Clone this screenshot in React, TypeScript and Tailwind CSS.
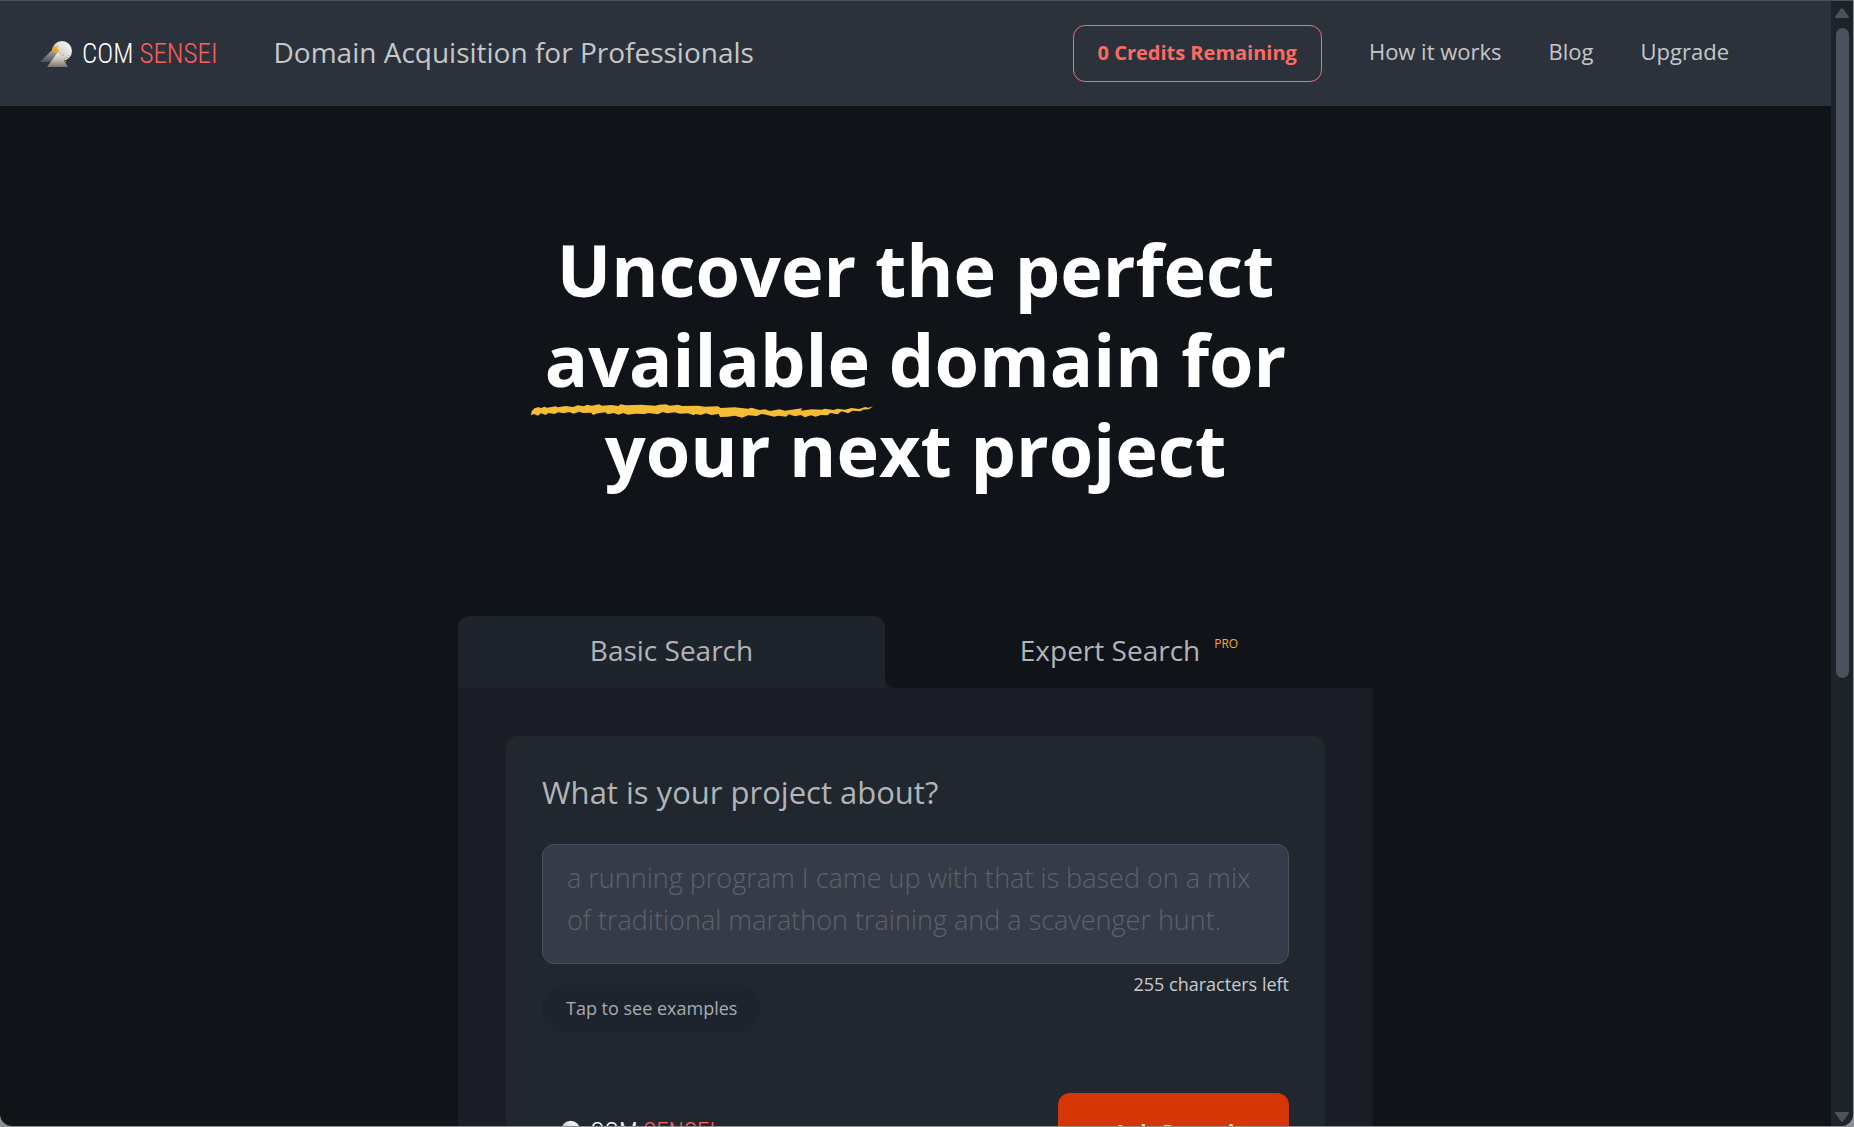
import { useState } from 'react'

const NAV_LINKS = [
  { label: 'How it works', href: '#how-it-works' },
  { label: 'Blog', href: '#blog' },
  { label: 'Upgrade', href: '#upgrade' },
]

const MAX_CHARS = 255

function LogoMark({ className }: { className: string }) {
  return (
    <svg className={className} viewBox="0 0 34 30" aria-hidden="true">
      <defs>
        <linearGradient id="sun" x1="0" y1="1" x2="1" y2="0">
          <stop offset="0" stopColor="#aaa59c" />
          <stop offset="0.6" stopColor="#e4e2de" />
          <stop offset="1" stopColor="#ffffff" />
        </linearGradient>
        <linearGradient id="peakBack" x1="0" y1="0" x2="0" y2="1">
          <stop offset="0" stopColor="#b5b1aa" />
          <stop offset="1" stopColor="#4f5055" />
        </linearGradient>
        <linearGradient id="peakFront" x1="0" y1="0" x2="0" y2="1">
          <stop offset="0" stopColor="#f4f4f4" />
          <stop offset="0.5" stopColor="#c3bfb9" />
          <stop offset="1" stopColor="#7d7268" />
        </linearGradient>
      </defs>
      <circle cx="22" cy="12" r="10" fill="url(#sun)" />
      <path d="M0 23L11 12l3-2 4 4-7 9z" fill="url(#peakBack)" />
      <path d="M12 10l2-3 2 1 2-2-1 4 2 1-1 2 2 1-2 1-2-2-2 1-1-2z" fill="#e9a82c" />
      <path d="M7 28L15 17l3-4 3 4 7 11z" fill="url(#peakFront)" />
      <path d="M24 19h1v1h-1zM26 18h2v1h-2zM23 16h1v1h-1zM25 22h1v1h-1zM28 16h1v1h-1zM19 21h1v1h-1z" fill="#dba640" />
    </svg>
  )
}

function Logo({ small = false }: { small?: boolean }) {
  return (
    <a href="#home" className="flex items-center gap-2">
      <LogoMark className={small ? 'h-7 w-8' : 'h-[30px] w-[34px]'} />
      <span
        className={`font-['Roboto_Condensed','Liberation_Sans_Narrow',Roboto,sans-serif] leading-8 font-light whitespace-nowrap text-white ${
          small ? 'text-[25px]' : 'text-[27px]'
        }`}
      >
        COM <span className="text-[#ff5f5a]">SENSEI</span>
      </span>
    </a>
  )
}

function Header() {
  return (
    <header className="flex h-[105px] shrink-0 items-center bg-[#2b323b] pr-[102px] pl-10">
      <Logo />
      <p className="ml-14 pb-1 text-[28px] text-[#c6c7c9]">Domain Acquisition for Professionals</p>
      <div className="ml-auto flex items-center gap-[47px] text-[22px] text-[#c6c7c9]">
        <button
          type="button"
          className="h-[57px] rounded-xl border border-[#ff6a60] px-6 pb-0.5 text-[20px] font-bold text-[#ff6a60]"
        >
          0 Credits Remaining
        </button>
        {NAV_LINKS.map((link) => (
          <a key={link.label} href={link.href} className="pb-1">
            {link.label}
          </a>
        ))}
      </div>
    </header>
  )
}

function BrushUnderline() {
  return (
    <svg
      className="absolute top-full -left-3.5 -mt-1 h-3.5 w-[342px]"
      viewBox="0 0 1024 42"
      preserveAspectRatio="none"
      aria-hidden="true"
    >
      <path
        d="M0 34L2 22 10 13 24 9 28 13 40 8 48 11 74 7 80 10 104 6 126 9 140 4 158 7 168 2 182 5 204 1 212 5 240 3 262 6 268 1 284 4 330 2 372 5 384 2 404 1 416 5 440 2 452 6 500 5 520 8 560 7 568 12 610 10 650 14 660 11 684 18 700 16 716 21 744 16 760 20 790 16 812 13 808 20 840 16 870 17 880 14 906 18 918 14 940 17 960 12 982 15 1000 9 1010 11 1024 7 1012 16 992 17 988 22 962 20 950 28 930 22 918 31 896 27 888 34 868 33 852 38 838 34 820 40 808 33 790 37 772 31 764 38 740 35 728 38 704 32 690 30 676 36 650 34 632 41 610 35 590 38 566 39 562 30 540 33 524 28 508 33 492 30 488 34 470 28 446 29 430 25 408 28 394 24 380 31 352 27 340 30 312 29 290 32 276 27 262 32 248 27 230 31 222 25 200 28 186 33 180 26 156 27 144 23 128 29 114 24 98 28 82 25 70 30 52 27 44 33 30 28 20 35 10 30z"
        fill="#f5bc35"
      />
    </svg>
  )
}

function Scrollbar() {
  return (
    <div className="flex w-[22px] shrink-0 flex-col items-center bg-[#1c232b] pt-[7px] pb-1" aria-hidden="true">
      <svg width="14" height="10" viewBox="0 0 14 10">
        <path d="M5.5 1.2a2 2 0 0 1 3 0l5 7a1 1 0 0 1-1 1.8h-11a1 1 0 0 1-1-1.8z" fill="#4b525c" />
      </svg>
      <div className="mt-2.5 min-h-0 w-full flex-1">
        <div className="mx-auto h-3/5 w-[13px] rounded-full bg-[#4b525c]" />
      </div>
      <svg width="14" height="10" viewBox="0 0 14 10">
        <path d="M5.5 8.8a2 2 0 0 0 3 0l5-7a1 1 0 0 0-1-1.8h-11a1 1 0 0 0-1 1.8z" fill="#4b525c" />
      </svg>
    </div>
  )
}

function SearchCard() {
  const [project, setProject] = useState('')

  return (
    <form className="rounded-xl bg-[#21272e] px-9 pt-9 pb-12">
      <label htmlFor="project" className="block text-[31px] leading-10 text-[#b1b4b9]">
        What is your project about?
      </label>
      <textarea
        id="project"
        rows={2}
        maxLength={MAX_CHARS}
        value={project}
        onChange={(e) => setProject(e.target.value)}
        placeholder="a running program I came up with that is based on a mix of traditional marathon training and a scavenger hunt."
        className="mt-8 block h-[120px] w-full resize-none rounded-xl border border-[#4a5160] bg-[#363b49] px-6 py-3 text-[27px] leading-[42px] font-light text-white placeholder:text-[#5d626b]"
      />
      <div className="flex items-start justify-between">
        <button
          type="button"
          className="mt-[21px] h-12 rounded-full bg-[#1d242d] px-6 pb-0.5 text-[18px] text-[#a9abae]"
        >
          Tap to see examples
        </button>
        <p className="mt-1.5 text-[18px] leading-7 text-[#c9cbce]">{MAX_CHARS - project.length} characters left</p>
      </div>
      <div className="mt-[60px] flex items-start justify-between pl-2">
        <div className="pt-6">
          <Logo small />
        </div>
        <button type="submit" className="h-20 w-[231px] rounded-xl bg-[#d63603] text-[24px] font-semibold text-white">
          Ask Sensei
        </button>
      </div>
    </form>
  )
}

export default function App() {
  return (
    <div className="h-screen bg-[#8f9092] pr-px pb-px font-['Open_Sans','Noto_Sans',sans-serif]">
      <div className="flex h-full overflow-hidden rounded-b-xl border-t border-[#4a535d] bg-[#101317]">
        <div className="flex min-w-0 flex-1 flex-col overflow-hidden">
          <Header />
          <main className="mx-auto w-full max-w-[915px] shrink-0 pt-[118px]">
            <h1 className="text-center text-[72px] leading-[90px] font-bold text-white">
              Uncover the perfect
              <br />
              <span className="relative">
                available
                <BrushUnderline />
              </span>{' '}
              domain for
              <br />
              your next project
            </h1>
            <div className="mt-[122px] flex h-[72px] text-[28px] text-[#b1b4b9]" role="tablist">
              <button
                type="button"
                role="tab"
                aria-selected="true"
                className="w-[427px] rounded-t-xl bg-[#1d242c] pb-1"
              >
                Basic Search
              </button>
              <div className="flex-1 bg-[#1a1d25]">
                <button
                  type="button"
                  role="tab"
                  aria-selected="false"
                  className="flex h-full w-full items-center justify-center gap-3.5 rounded-bl-xl bg-[#101317] pb-1"
                >
                  Expert Search
                  <sup className="text-[12px] text-[#f5a93b]">PRO</sup>
                </button>
              </div>
            </div>
            <div className="bg-[#1a1d25] p-12">
              <SearchCard />
            </div>
          </main>
        </div>
        <Scrollbar />
      </div>
    </div>
  )
}
